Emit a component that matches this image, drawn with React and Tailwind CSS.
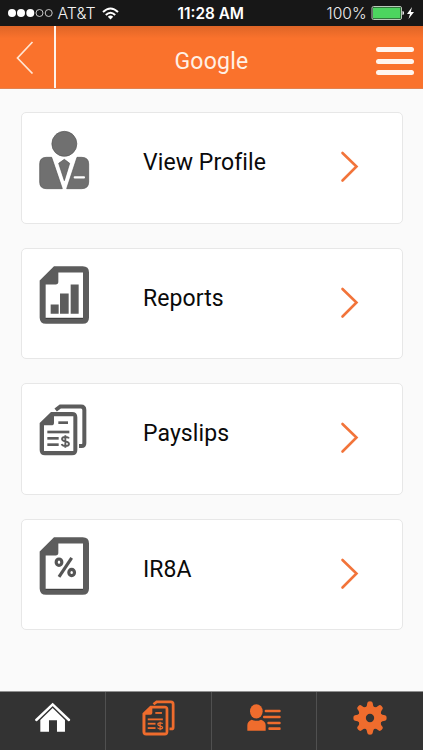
import React from "react";

const GRAY = "#5c5c5c";

function ProfileIcon() {
  return (
    <svg viewBox="66 72 162 186" className="h-[62px] w-[54px]">
      <g fill="#707070" stroke="#555" strokeWidth="2" strokeLinejoin="round">
        <circle cx="148" cy="116.500" r="37.500" />
        <path d="M94 157H110L142 251H94Q74 251 74 231V177Q74 157 94 157Z" />
        <path d="M186 157H200Q221 157 221 177V231Q221 251 200 251H155Z" />
        <path d="M148 163L164 175L148 227L131 175Z" />
      </g>
      <rect x="176" y="213.500" width="34" height="7" rx="3" fill="#fff" />
    </svg>
  );
}

function Page({ y = 0 }) {
  return (
    <g transform={`translate(0 ${y})`}>
      <path
        fillRule="evenodd"
        fill={GRAY}
        d="M117 79H203Q222 79 222 98V233Q222 252 203 252H93Q74 252 74 233V122ZM130 98V126Q130 134 122 134H92V234H204V98Z"
      />
      <path d="M92 236H204" stroke="#404040" strokeWidth="3" />
    </g>
  );
}

function ReportIcon() {
  return (
    <svg viewBox="66 72.500 162 186" className="h-[62px] w-[54px]">
      <Page />
      <path fill={GRAY} d="M107 194H131V222H107ZM135 161H161V222H135ZM167 134H191V222H167Z" />
    </svg>
  );
}

function PercentIcon() {
  return (
    <svg viewBox="66 75.500 162 186" className="h-[62px] w-[54px]">
      <Page y={3} />
      <g fill="none" stroke="#555" strokeWidth="9.500">
        <ellipse cx="132" cy="157" rx="8.500" ry="9.500" />
        <ellipse cx="170" cy="188" rx="8.500" ry="9.500" />
        <path d="M170 144L132 201" />
      </g>
    </svg>
  );
}

function PayslipArt({ color }) {
  return (
    <g>
      <path
        d="M122 104L136 93.500H198Q208 93.500 208 104V204Q208 212 200 212H192"
        fill="none"
        stroke={color}
        strokeWidth="12"
      />
      <path
        fillRule="evenodd"
        fill={color}
        d="M108 110H171Q187 110 187 126V224Q187 240 171 240H90Q74 240 74 224V143ZM117 123V142Q117 150 109 150H87V227H175V123Z"
      />
      <g fill={color}>
        <rect x="130" y="138" width="29" height="8" />
        <rect x="97" y="166" width="66" height="8" />
        <rect x="97" y="185" width="34" height="8" />
        <rect x="97" y="204" width="34" height="8" />
      </g>
      <path
        d="M162 189Q160 185 151 185Q141 185 141 191Q141 196 151 198Q162 200 162 206Q162 212 151 212Q142 212 140 206M151 180V217"
        fill="none"
        stroke={color}
        strokeWidth="5.500"
      />
    </g>
  );
}

function PayslipIcon() {
  return (
    <svg viewBox="66 74 162 186" className="h-[62px] w-[54px]">
      <PayslipArt color={GRAY} />
    </svg>
  );
}

function Chevron() {
  return (
    <svg viewBox="0 0 20 34" className="h-[34px] w-5" fill="none" stroke="#f2743a" strokeWidth="2.600">
      <path d="M2.500 4L16.500 17.500L2.500 31.500" strokeLinecap="round" />
    </svg>
  );
}

const items = [
  { label: "View Profile", Icon: ProfileIcon },
  { label: "Reports", Icon: ReportIcon },
  { label: "Payslips", Icon: PayslipIcon },
  { label: "IR8A", Icon: PercentIcon },
];

function StatusBar() {
  return (
    <div className="flex h-[26px] items-center bg-[#171717] pl-2 text-white">
      <svg viewBox="0 0 46 10" className="h-[10px] w-[46px] shrink-0">
        <g fill="#fff">
          <circle cx="4" cy="5" r="4" />
          <circle cx="13" cy="5" r="4" />
          <circle cx="22.300" cy="5" r="4" />
        </g>
        <g fill="none" stroke="#ddd" strokeWidth="0.9">
          <circle cx="31.500" cy="5" r="3.500" />
          <circle cx="40.700" cy="5" r="3.500" />
        </g>
      </svg>
      <svg viewBox="0 0 39 20" className="ml-[3px] h-5 w-[39px] shrink-0">
        <text x="0.500" y="15.500" fontSize="16" fontWeight="300" textLength="38" lengthAdjust="spacingAndGlyphs" fontFamily="Inter, sans-serif" fill="#f2f2f2">
          AT&amp;T
        </text>
      </svg>
      <svg viewBox="0 0 17 13" className="ml-[6px] h-[13px] w-[17px] shrink-0" fill="none" stroke="#fff" strokeWidth="2">
        <path d="M1 5Q8.500 -2 16 5M3.800 8Q8.500 3.500 13.200 8" />
        <path d="M5.800 9.800Q8.500 7.400 11.200 9.800L8.500 12.500Z" fill="#fff" stroke="none" />
      </svg>
      <svg viewBox="0 0 68 20" className="ml-[58px] h-5 w-[68px] shrink-0">
        <text x="0.500" y="15.500" fontSize="15.500" fontWeight="600" textLength="66.500" lengthAdjust="spacingAndGlyphs" fontFamily="Inter, sans-serif" fill="#fff">
          11:28 AM
        </text>
      </svg>
      <svg viewBox="0 0 42 20" className="ml-[81px] h-5 w-[42px] shrink-0">
        <text x="0.500" y="15.500" fontSize="16" fontWeight="300" textLength="40" lengthAdjust="spacingAndGlyphs" fontFamily="Inter, sans-serif" fill="#eee">
          100%
        </text>
      </svg>
      <svg viewBox="0 0 44 16" className="ml-[3px] h-4 w-11 shrink-0">
        <rect x="1" y="1.500" width="29.500" height="13" rx="1.500" fill="#171717" stroke="#b9c9b9" />
        <rect x="2" y="2.500" width="27.500" height="11" rx="0.500" fill="#4cd55f" />
        <path d="M31.500 6Q33 6 33 8T31.500 10Z" fill="#fff" />
        <path d="M41 2L36 9H39L37.500 14L43 7H39.800Z" fill="#fff" />
      </svg>
    </div>
  );
}

function Header() {
  return (
    <header className="flex h-[63px] items-stretch border-b border-[#e28250] bg-linear-to-b from-[#df6527] via-[#fa722c] via-20% to-[#fa722c]">
      <button className="flex w-[54px] shrink-0 items-center pl-4">
        <svg viewBox="0 0 18 34" className="h-[34px] w-[18px]" fill="none" stroke="#ffe5d3" strokeWidth="1.700">
          <path d="M16.500 2L1.500 18L16.500 33.500" />
        </svg>
      </button>
      <div className="w-[2px] bg-[#fff1e8]" />
      <h1 className="flex flex-1 items-center justify-center pt-2 pr-[9px] font-[Roboto,sans-serif] text-[23px] leading-none tracking-[0.25px] text-[#fff0e4]">
        Google
      </h1>
      <button className="flex w-[47px] shrink-0 flex-col gap-[6.500px] pt-[21px]">
        <span className="h-[5px] w-[38px] rounded-sm bg-[#fff5ee]" />
        <span className="h-[5px] w-[38px] rounded-sm bg-[#fff5ee]" />
        <span className="h-[5px] w-[38px] rounded-sm bg-[#fff5ee]" />
      </button>
    </header>
  );
}

function TabBar() {
  return (
    <nav className="grid h-[59px] grid-cols-4 border-t border-[#909090] bg-[#333]">
      <div className="flex justify-center border-r border-[#505050] pt-[9px]">
        <svg viewBox="102 64 112 98" className="h-[32.700px] w-[37.300px]">
          <path d="M109 121L158 74L207 121" fill="none" stroke="#fff" strokeWidth="7.500" strokeLinecap="round" />
          <path d="M158 85L195 121V156H171V122H147V156H121V121Z" fill="#fff" />
        </svg>
      </div>
      <div className="flex justify-center border-r border-[#505050] pt-[7px]">
        <svg viewBox="68 81 152 166" className="h-[38px] w-[35px]">
          <PayslipArt color="#ef6c2d" />
        </svg>
      </div>
      <div className="flex justify-center border-r border-[#505050] pt-[11px] pl-px">
        <svg viewBox="107 70 108 86" className="h-[28.700px] w-9" fill="#ef6c2d">
          <ellipse cx="138" cy="95" rx="19" ry="21.500" />
          <path d="M111 153V137Q111 125 124 120Q138 127 152 120Q166 125 166 137V153Z" />
          <rect x="163" y="90" width="48" height="8" rx="3" />
          <rect x="158" y="108" width="53" height="8" rx="3" />
          <rect x="171" y="126" width="40" height="8" rx="3" />
          <rect x="174" y="143" width="37" height="8" rx="3" />
        </svg>
      </div>
      <div className="flex justify-center pt-[9px]">
        <svg viewBox="-51 -51 102 102" className="h-[34px] w-[34px]">
          <g fill="#ef6c2d">
            {[0, 45, 90, 135, 180, 225, 270, 315].map((a) => (
              <path key={a} transform={`rotate(${a})`} d="M-14 -30Q-8 -37 -8 -45Q-8 -50 0 -50T8 -45Q8 -37 14 -30Z" />
            ))}
          </g>
          <circle r="24" fill="none" stroke="#ef6c2d" strokeWidth="23" />
        </svg>
      </div>
    </nav>
  );
}

export default function App() {
  return (
    <div className="flex h-[750px] w-[423px] flex-col overflow-hidden bg-[#fafafa]">
      <StatusBar />
      <Header />
      <main className="flex flex-1 flex-col gap-6 pt-[23.300px] pr-5 pl-[21px]">
        {items.map(({ label, Icon }) => (
          <div
            key={label}
            className="flex h-[111.500px] shrink-0 items-start rounded-[5px] border border-[#e7e7e7] bg-white"
          >
            <div className="ml-[15px] mt-[15.500px] w-[54px]">
              <Icon />
            </div>
            <span className="ml-[52px] mt-[37px] w-[197px] font-[Roboto,sans-serif] text-[23px] leading-[26px] tracking-[0.08px] text-[#0a0a0a]">
              {label}
            </span>
            <div className="mt-[36px]">
              <Chevron />
            </div>
          </div>
        ))}
      </main>
      <TabBar />
    </div>
  );
}
